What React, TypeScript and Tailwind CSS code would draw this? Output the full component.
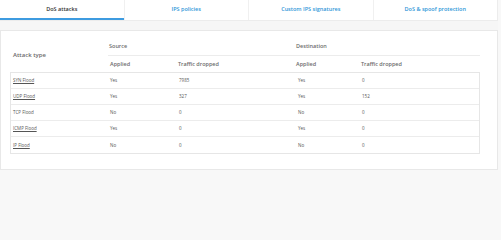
import React from "react";

const tabs = ["DoS attacks", "IPS policies", "Custom IPS signatures", "DoS & spoof protection"];
const rows = [
  { name: "SYN Flood", link: true, sa: "Yes", st: "7985", da: "Yes", dt: "0" },
  { name: "UDP Flood", link: true, sa: "Yes", st: "327", da: "Yes", dt: "152" },
  { name: "TCP Flood", link: false, sa: "No", st: "0", da: "No", dt: "0" },
  { name: "ICMP Flood", link: true, sa: "Yes", st: "0", da: "Yes", dt: "0" },
  { name: "IP Flood", link: true, sa: "No", st: "0", da: "No", dt: "0" },
];

const cols = "grid-cols-[98px_70px_118px_65px_1fr]";

export default function App() {
  return (
    <div className="w-[501px] h-[240px] bg-[#f8f8f8] font-['Open_Sans',sans-serif] overflow-hidden">
      <div className="w-[498px] h-[20px] bg-white border-r border-[#ececec] flex">
        {tabs.map((t, i) => (
          <div
            key={t}
            className={`flex-1 flex flex-col ${i < 3 ? "border-r border-[#f0f0f0]" : ""}`}
          >
            <div
              className={`flex-1 flex items-center justify-center text-[5.5px] font-semibold ${
                i === 0 ? "text-[#333]" : "text-[#2d96d8]"
              }`}
            >
              {t}
            </div>
            <div className={`h-[2px] ${i === 0 ? "bg-[#3d9be0]" : "bg-white"}`}></div>
          </div>
        ))}
      </div>
      <div className="h-[10px] bg-[#f6f6f6] w-[498px] border-t border-[#ececec]"></div>
      <div className="w-[498px] h-[140px] bg-white border border-[#e8e8e8] pt-[7px] pl-[9px] pr-[17px]">
        <div className="text-[#6b6b6b] font-semibold">
          <div className="flex">
            <div className="w-[98px] h-[34px] flex items-center pl-[3px] text-[6px] pt-[1px]">Attack type</div>
            <div className="flex-1 flex flex-col">
              <div className="flex h-[18px] border-b border-[#ececec] text-[5.5px]">
                <div className="w-[188px] flex items-center pl-[1px]">Source</div>
                <div className="flex-1 flex items-center">Destination</div>
              </div>
              <div className="flex h-[16px] text-[5.5px]">
                <div className="w-[70px] flex items-center pl-[2px]">Applied</div>
                <div className="w-[118px] flex items-center">Traffic dropped</div>
                <div className="w-[65px] flex items-center">Applied</div>
                <div className="flex-1 flex items-center">Traffic dropped</div>
              </div>
            </div>
          </div>
        </div>
        <div className="border-l border-r border-b border-[#e6e6e6] border-t">
          {rows.map((r, i) => (
            <div
              key={r.name}
              className={`grid ${cols} h-[16px] items-center text-[4.5px] text-[#555] ${
                i < rows.length - 1 ? "border-b border-[#ececec]" : ""
              }`}
            >
              <div className={`pl-[2px] ${r.link ? "underline" : ""}`}>{r.name}</div>
              <div className="pl-[1px]">{r.sa}</div>
              <div>{r.st}</div>
              <div className="pl-[1px]">{r.da}</div>
              <div>{r.dt}</div>
            </div>
          ))}
        </div>
      </div>
    </div>
  );
}
